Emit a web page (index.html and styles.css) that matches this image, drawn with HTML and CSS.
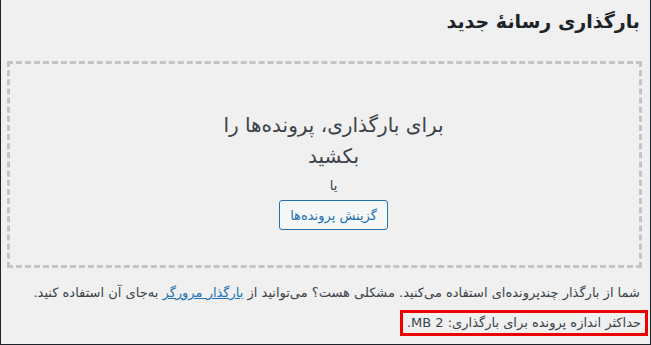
FILE: index.html
```html
<!DOCTYPE html>
<html lang="fa" dir="rtl">
<head>
    <meta charset="UTF-8">
    <meta name="viewport" content="width=device-width, initial-scale=1.0">
    <title>بارگذاری رسانهٔ جدید</title>
    <link rel="stylesheet" href="styles.css">
</head>
<body>
    <div class="wrap">
        <h1 class="page-title">بارگذاری رسانهٔ جدید</h1>
        <div class="drop-area">
            <p class="drop-info">برای بارگذاری، پرونده‌ها را بکشید</p>
            <p class="drop-or">یا</p>
            <button class="browse-button">گزینش پرونده‌ها</button>
        </div>
        <p class="upload-flash">شما از بارگذار چندپرونده‌ای استفاده می‌کنید. مشکلی هست؟ می‌توانید از <a href="#">بارگذار مرورگر</a> به‌جای آن استفاده کنید.</p>
        <p class="max-size"><span class="highlight">حداکثر اندازه پرونده برای بارگذاری: 2 MB.</span></p>
    </div>
</body>
</html>
```

FILE: styles.css
```css
html, body {
    margin: 0;
    padding: 0;
}
body {
    background-color: #f0f0f0;
    font-family: Tahoma, "DejaVu Sans", sans-serif;
    color: #3c434a;
}
.wrap {
    box-sizing: border-box;
    height: 345px;
    border: 1px solid #1d2327;
    border-top: none;
    padding: 0 8px 0 6px;
}
.page-title {
    margin: 0;
    padding: 10px 2px 0 0;
    height: 61px;
    box-sizing: border-box;
    font-size: 19px;
    font-weight: 700;
    color: #1d2327;
}
.drop-area {
    box-sizing: border-box;
    height: 207px;
    border: 3px dashed #c3c4c7;
    padding: 46px 0 0 18px;
    text-align: center;
}
.drop-info {
    margin: 0 auto;
    width: 230px;
    font-size: 20px;
    line-height: 31px;
    color: #3c434a;
}
.drop-or {
    margin: 4px 0 4px;
    font-size: 13px;
    line-height: 20px;
}
.browse-button {
    font-family: inherit;
    font-size: 13px;
    color: #2271b1;
    background-color: #f6f7f7;
    border: 1px solid #2271b1;
    border-radius: 3px;
    padding: 0 10px;
    height: 30px;
    cursor: pointer;
}
.upload-flash {
    margin: 16px 0 0;
    padding-right: 2px;
    font-size: 13px;
    line-height: 18px;
    white-space: nowrap;
}
.upload-flash a {
    color: #2271b1;
}
.max-size {
    margin: 8px -6px 0 0;
    font-size: 13px;
}
.highlight {
    display: inline-block;
    border: 3px solid #ee0000;
    padding: 2px 4px 2px 4px;
    line-height: 16px;
}
```
